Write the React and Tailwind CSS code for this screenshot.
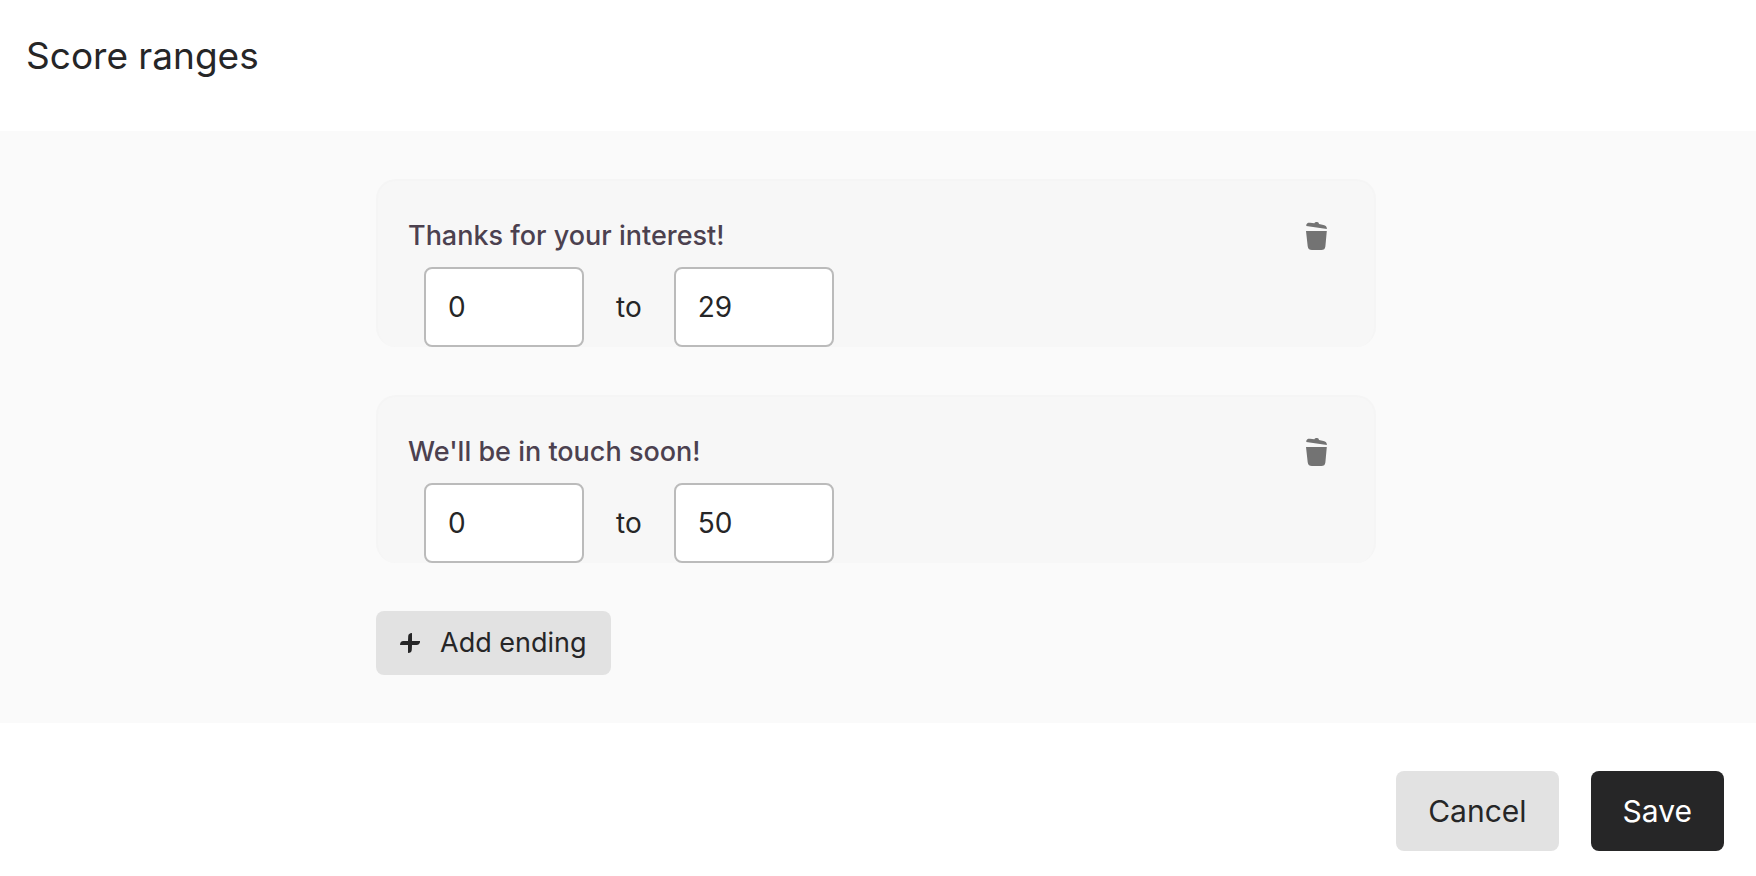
import { useState } from 'react';

const initialRanges = [
  { id: 1, title: 'Thanks for your interest!', from: '0', to: '29' },
  { id: 2, title: "We'll be in touch soon!", from: '0', to: '50' },
];

const TrashIcon = () => (
  <svg className="w-[22px] h-7" viewBox="0 0 22 28" fill="currentColor" aria-hidden="true">
    <path d="M0.3 2.8C0.8 1.2 2 0.6 4 0.8L8.4 1.2C9 0.3 10 0 11 0.1C12.3 0.3 12.8 0.9 13 1.9L17.4 3C19.8 3.6 20.9 4.7 20.9 7L0.3 3.9Z" />
    <path d="M0 9H20.8L19.4 24.2C19.1 26.9 17.8 28 15.3 28H6C3.5 28 2 26.9 1.7 24.2Z" />
  </svg>
);

const PlusIcon = () => (
  <svg className="w-5 h-5" viewBox="0 0 20 20" fill="currentColor" aria-hidden="true">
    <path d="M8.2 3.2C8.3 1.2 9.6 0.1 12 0V8H20.2C20 10.6 18.9 11.8 16.6 11.9L12 12L11.8 16.8C11.7 18.9 10.4 20 8 20V12H0C0.1 9.4 1.2 8.2 3.4 8.1L8 8Z" />
  </svg>
);

const ScoreInput = ({ label, value, onChange }) => (
  <input
    type="text"
    inputMode="numeric"
    aria-label={label}
    value={value}
    onChange={(e) => onChange(e.target.value)}
    className="w-40 h-20 px-[22px] bg-white border-2 border-[#bbbbbb] rounded-lg text-[28px] text-[#262627] outline-none focus:border-[#262627]"
  />
);

const RangeCard = ({ range, onChange, onDelete }) => (
  <div className="rounded-[20px] border-2 border-b-0 border-[#f5f5f5] bg-[#f7f7f7]">
    <div className="flex items-center justify-between pt-[34px] pb-[10px] pl-[30px] pr-[46px]">
      <h2 className="text-[27px] leading-[42px] font-medium text-[#4c414f]">{range.title}</h2>
      <button type="button" aria-label={`Delete ${range.title}`} onClick={onDelete} className="text-[#737373]">
        <TrashIcon />
      </button>
    </div>
    <div className="flex items-center gap-8 pl-[46px]">
      <ScoreInput label={`${range.title} from`} value={range.from} onChange={(from) => onChange({ ...range, from })} />
      <span className="text-[28px] text-[#262627]">to</span>
      <ScoreInput label={`${range.title} to`} value={range.to} onChange={(to) => onChange({ ...range, to })} />
    </div>
  </div>
);

const App = () => {
  const [ranges, setRanges] = useState(initialRanges);

  const updateRange = (next) => setRanges(ranges.map((r) => (r.id === next.id ? next : r)));
  const deleteRange = (id) => setRanges(ranges.filter((r) => r.id !== id));
  const addRange = () => setRanges([...ranges, { id: Date.now(), title: 'New ending', from: '0', to: '0' }]);

  return (
    <div className="min-h-screen bg-white font-['Inter','Liberation_Sans',sans-serif] text-[#262627]">
      <header className="px-[26px] pt-8 pb-[51px]">
        <h1 className="text-[37px] leading-[48px]">Score ranges</h1>
      </header>

      <main className="bg-[#fafafa] py-12 pl-6 pr-7">
        <div className="max-w-[1000px] mx-auto flex flex-col items-stretch gap-12">
          {ranges.map((range) => (
            <RangeCard key={range.id} range={range} onChange={updateRange} onDelete={() => deleteRange(range.id)} />
          ))}
          <button type="button" onClick={addRange} className="self-start flex items-center gap-5 h-16 px-6 rounded-lg bg-[#e2e2e2] text-[27px]">
            <PlusIcon />
            Add ending
          </button>
        </div>
      </main>

      <footer className="flex justify-end gap-8 px-8 pt-12 pb-6">
        <button type="button" className="h-20 px-8 rounded-lg bg-[#e2e2e2] text-[30px]">Cancel</button>
        <button type="button" className="h-20 px-8 rounded-lg bg-[#262627] text-white text-[30px]">Save</button>
      </footer>
    </div>
  );
};

export default App;
